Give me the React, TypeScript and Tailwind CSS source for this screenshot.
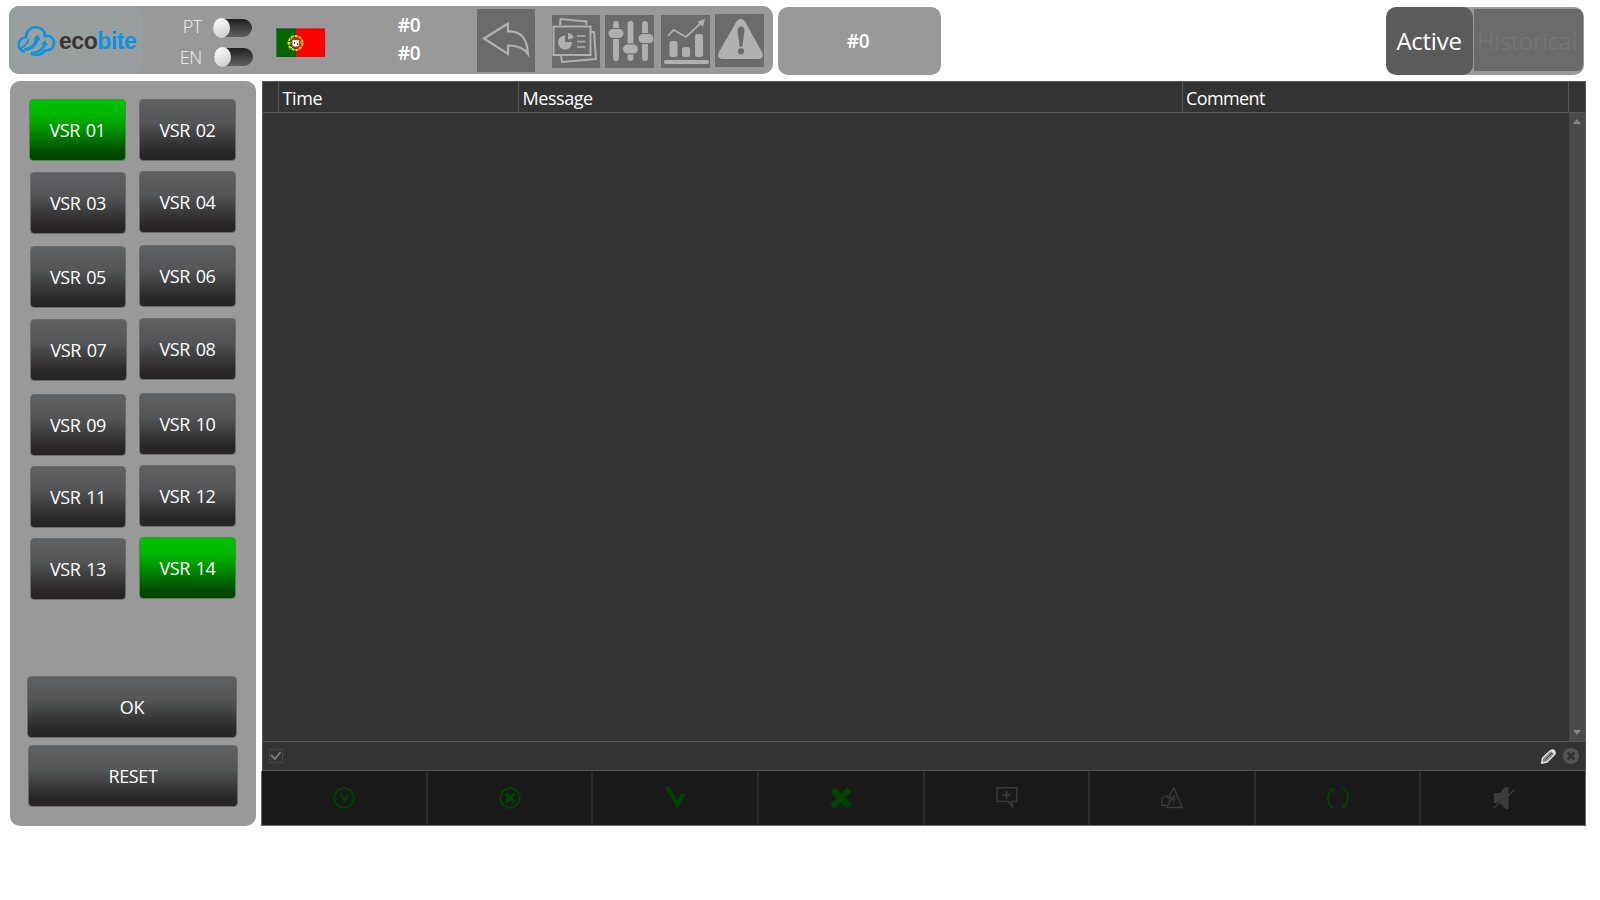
import type { ReactNode } from "react";

function GradientButton({ label, className, active = false }: { label: string; className: string; active?: boolean }) {
  const look = active
    ? "border-[#4f8a4f] bg-[linear-gradient(180deg,#00c000_0%,#00b800_22%,#00a000_42%,#004a00_88%,#004400_100%)]"
    : "border-[#6b6b6b] bg-[linear-gradient(180deg,#5f6163_0%,#535557_38%,#2a2728_86%,#252324_100%)]";
  return (
    <button
      className={`flex h-[62px] shrink-0 items-center justify-center rounded-[4px] border pb-px text-[18px] leading-none tracking-[-0.35px] text-white [word-spacing:1.2px] ${look} ${className}`}
    >
      {label}
    </button>
  );
}

function Toggle({ className }: { className: string }) {
  return (
    <div className={`flex h-[18px] w-[39px] items-center rounded-full bg-[linear-gradient(180deg,#1e1e1e,#606264)] ${className}`}>
      <div className="h-[20px] w-[17px] shrink-0 rounded-[50%] bg-[linear-gradient(160deg,#ffffff,#c9c9cb)]" />
    </div>
  );
}

function Logo() {
  return (
    <div className="flex h-[68px] w-[134px] items-center rounded-[10px] bg-[#999e9f] pl-[8px]">
      <svg width="39" height="31" viewBox="0 0 39 31" className="mt-[1px] shrink-0" fill="none" stroke="#0b93e0" strokeWidth="2.6">
        <path d="M8 27C3 26 1 22 2 18C3 14 6 12.500 9 12.500C8.500 6 14 2 18.500 2.200C24 2.300 28 5 27.800 11C34 10 37 14 37 18C37 23 33 25.500 28 25.500C25 30 18 31 14 28.500" />
        <path d="M7 23C13 23 17 19 18 14L15.500 14.500L21 9.500L24 16L21.500 15C20 22 14 26 8 26Z" fill="#0b93e0" stroke="none" />
        <path d="M14 27C21 27 25 23 26 19L23.500 19.500L28 15L31 20.500L29 20C27 26 20 30 14 28Z" fill="#0b93e0" stroke="none" />
        <path d="M3 24C8 21 11 18 12 14" strokeWidth="1.800" />
      </svg>
      <span className="mt-[2px] ml-[3px] font-['Liberation_Sans'] text-[23px] leading-none font-bold tracking-[-0.45px] text-[#3a3432]">
        eco<span className="text-[#0b93e0]">bite</span>
      </span>
    </div>
  );
}

function Flag() {
  return (
    <svg width="49" height="29" viewBox="0 0 49 29">
      <rect width="49" height="29" fill="#fe0000" />
      <rect width="20" height="29" fill="#006600" />
      <path d="M0 .5H20" stroke="#356b50" />
      <path d="M20 .5H49" stroke="#d43a3a" />
      <path d="M.5 0V29" stroke="#3d6b50" />
      <circle cx="19.500" cy="15" r="7" fill="none" stroke="#f5e800" strokeWidth="1.800" strokeDasharray="3 1" />
      <path d="M12.500 15H26.500M15 10L24 20M15 20L24 10" stroke="#f5e800" />
      <path d="M15.500 10H24V16C24 21 15.500 21 15.500 16Z" fill="#f01818" />
      <path d="M16.500 12H23V16C23 19.500 16.500 19.500 16.500 16Z" fill="#ffffff" />
      <path d="M18 14h1v2h-1zM21 15h1v2h-1z" fill="#3344aa" />
    </svg>
  );
}

function Tile({ children, className }: { children: ReactNode; className: string }) {
  return <div className={`flex shrink-0 bg-[#6b6b6b] ${className}`}>{children}</div>;
}

function BackIcon() {
  return (
    <svg width="58" height="63" viewBox="0 0 58 63" fill="none" stroke="#b0b0b0" strokeWidth="2.2">
      <path d="M7 29.500L31 14.500V22.500C42 22 50 27 51 45C47 39 41 36.500 31 36.500V45Z" />
    </svg>
  );
}

function ReportIcon() {
  return (
    <svg width="48" height="53" viewBox="0 0 48 53" fill="none" stroke="#b0b0b0" strokeWidth="2">
      <path d="M8 10L8.500 4L34.500 6.500L34 10" />
      <path d="M39 17L42 17L44 44L10 47L9 41" />
      <path d="M1.500 11.500H38.500V40H1.500Z" />
      <path d="M13 20.500V27H20A7 7 0 1 1 13 20.500Z" fill="#b0b0b0" stroke="none" />
      <path d="M16 18A6 6 0 0 1 21.500 23L16 24.500Z" fill="#b0b0b0" stroke="none" />
      <path d="M25 21H33.500M25 26.500H33.500M25 32H33.500" strokeWidth="1.600" />
    </svg>
  );
}

function SlidersIcon() {
  return (
    <svg width="49" height="53" viewBox="0 0 49 53" fill="none" strokeLinecap="round">
      <path d="M11 9V43M25.500 9V43M40 9V43" stroke="#b0b0b0" strokeWidth="5.800" />
      <g stroke="#6b6b6b" strokeWidth="11">
        <path d="M8 18.500H14M22.500 34H28.500M38 23.500H44" />
      </g>
      <path d="M8 18.500H14M22.500 34H28.500M38 23.500H44" stroke="#b0b0b0" strokeWidth="9" />
    </svg>
  );
}

function ChartIcon() {
  return (
    <svg width="49" height="53" viewBox="0 0 49 53" fill="#b0b0b0">
      <rect x="8.500" y="26" width="8" height="16" rx="2.500" />
      <rect x="21" y="32" width="8" height="10" rx="2.500" />
      <rect x="34" y="19" width="8" height="23" rx="2.500" />
      <rect x="3" y="45" width="45" height="4" rx="2" />
      <path d="M7 21L12.500 15L25 22L40.500 7.500" fill="none" stroke="#b0b0b0" strokeWidth="1.800" />
      <path d="M44 4L42 12L36.500 6.500Z" />
    </svg>
  );
}

function WarningIcon() {
  return (
    <svg width="49" height="53" viewBox="0 0 49 53">
      <path d="M21.500 7.500Q26 2 30 7.500L47 38Q50 45 43 45H8Q1 45 4 38Z" fill="#b0b0b0" />
      <path d="M26 12.500Q30 12.500 29.300 18L27.500 32Q26 34 24.500 32L22.700 18Q22 12.500 26 12.500Z" fill="#6b6b6b" />
      <circle cx="26" cy="37.300" r="3.100" fill="#6b6b6b" />
    </svg>
  );
}

const G = "#004400";
const D = "#3c3c3c";

const tools: ReactNode[] = [
  <svg key="ack" width="22" height="22" viewBox="0 0 22 22" fill="none" stroke={G} strokeWidth="1.800">
    <circle cx="11" cy="11" r="9.800" />
    <path d="M7.500 6.500L11.500 14L14.500 8.500" />
  </svg>,
  <svg key="ack-off" width="22" height="22" viewBox="0 0 22 22" fill="none" stroke={G}>
    <circle cx="11" cy="11" r="9.800" strokeWidth="1.800" />
    <path d="M6.800 6.800L15.200 15.200M15.200 6.800L6.800 15.200" strokeWidth="3.400" />
  </svg>,
  <svg key="ack-all" width="22" height="22" viewBox="0 0 22 22" fill={G}>
    <path d="M0 0H5L12 13.500L16 6.500H21L12.500 22Z" />
  </svg>,
  <svg key="clear-all" width="22" height="22" viewBox="0 0 22 22" fill="none" stroke={G} strokeWidth="6.300">
    <path d="M2.500 2.500L19.500 19.500M19.500 2.500L2.500 19.500" />
  </svg>,
  <svg key="comment" width="22" height="22" viewBox="0 0 22 22" fill="none" stroke={D} strokeWidth="1.400">
    <path d="M1 .8H20.800V14.400H15.500L16.500 19.500L12 14.400H1Z" />
    <path d="M6.500 8H14.500M10.500 4V12" strokeWidth="1.700" />
  </svg>,
  <svg key="alarm" width="22" height="22" viewBox="0 0 22 22" fill="none" stroke={D} strokeWidth="1.300">
    <path d="M7.500 10L13 1L21 20.500H5" />
    <path d="M13 8V15M13 16.500V18" strokeWidth="1.400" />
    <path d="M.8 11.500L5.500 8.500L7 10.500H11V13H8.500V16L6.500 18.500H.8Z" />
  </svg>,
  <svg key="sync" width="22" height="22" viewBox="0 0 22 22" fill="none" stroke={G} strokeWidth="1.800">
    <path d="M6.500 21C-.5 17 -.5 8 4.500 3.500M15.500 1C22.500 5 22.500 14 17.500 18.500" />
    <path d="M2 1.200H7.500V6ZM20 20.500H14.500L16 15.500Z" fill={G} stroke="none" />
  </svg>,
  <svg key="mute" width="22" height="22" viewBox="0 0 22 22" fill={D}>
    <path d="M1 6H7L12 0H15.500V22H13L7 16H1Z" />
    <path d="M.5 21L21.500 3" stroke={D} strokeWidth="1.300" />
    <path d="M.5 19.500L7.500 13.500" stroke="#1a1a1a" strokeWidth="1" />
  </svg>,
];

const leftColumn = [
  { label: "VSR 01", className: "w-[97px]", active: true },
  { label: "VSR 03", className: "mt-[11px] ml-px w-[96px]" },
  { label: "VSR 05", className: "mt-[12px] ml-px w-[96px]" },
  { label: "VSR 07", className: "mt-[11px] ml-px w-[97px]" },
  { label: "VSR 09", className: "mt-[13px] ml-px w-[96px]" },
  { label: "VSR 11", className: "mt-[10px] ml-px w-[96px]" },
  { label: "VSR 13", className: "mt-[10px] ml-px w-[96px]" },
];

const rightColumn = [
  { label: "VSR 02", className: "w-[97px]" },
  { label: "VSR 04", className: "mt-[10px] w-[97px]" },
  { label: "VSR 06", className: "mt-[12px] w-[97px]" },
  { label: "VSR 08", className: "mt-[11px] w-[97px]" },
  { label: "VSR 10", className: "mt-[13px] w-[97px]" },
  { label: "VSR 12", className: "mt-[10px] w-[97px]" },
  { label: "VSR 14", className: "mt-[10px] w-[97px]", active: true },
];

function TopBar() {
  return (
    <header className="flex h-[75px] items-start pt-[6px] pl-[9px]">
      <div className="flex h-[68px] w-[764px] shrink-0 items-start rounded-[10px] bg-[#999999]">
        <Logo />
        <div className="flex w-[59px] flex-col items-end pt-[10px] font-light text-[#f2f2f2]">
          <span className="flex h-[20px] items-center text-[18px] leading-none tracking-[-0.3px]">PT</span>
          <span className="mt-[11px] flex h-[20px] items-center text-[18px] leading-none tracking-[-0.3px]">EN</span>
        </div>
        <div className="ml-[11px] flex flex-col pt-[13px]">
          <Toggle className="" />
          <Toggle className="mt-[11px] ml-px" />
        </div>
        <div className="mt-[22px] ml-[23px]">
          <Flag />
        </div>
        <div className="ml-[72px] flex w-[24px] flex-col items-center pt-[9px] text-[19px] font-semibold tracking-[-0.4px] text-white">
          <span className="flex h-[20px] items-center leading-none">#0</span>
          <span className="mt-[8px] flex h-[20px] items-center leading-none">#0</span>
        </div>
        <Tile className="mt-[3px] ml-[56px] h-[63px] w-[58px]"><BackIcon /></Tile>
        <Tile className="mt-[9px] ml-[17px] h-[53px] w-[48px]"><ReportIcon /></Tile>
        <Tile className="mt-[9px] ml-[5px] h-[53px] w-[49px]"><SlidersIcon /></Tile>
        <Tile className="mt-[9px] ml-[7px] h-[53px] w-[49px]"><ChartIcon /></Tile>
        <Tile className="mt-[8px] ml-[5px] h-[53px] w-[49px]"><WarningIcon /></Tile>
      </div>
      <div className="mt-px ml-[5px] flex h-[68px] w-[163px] items-center justify-center rounded-[10px] bg-[#999999] pt-px pr-[3px] text-[19px] leading-none font-semibold tracking-[-0.4px] text-white">
        #0
      </div>
      <div className="mt-px ml-[445px] flex h-[68px] w-[198px] overflow-hidden rounded-[10px] bg-[#999999] text-[24px] leading-none tracking-[-0.25px]">
        <div className="flex w-[87px] items-center justify-center rounded-[10px] bg-[#5b5b5b] pr-px text-white">Active</div>
        <div className="mt-[2px] ml-px flex h-[62px] w-[109px] items-center justify-center rounded-r-[6px] bg-[#6b6b6b] pt-[2px] pr-[3px] tracking-[-0.5px] text-[#757575]">
          Historical
        </div>
      </div>
    </header>
  );
}

function Sidebar() {
  return (
    <aside className="flex h-[745px] w-[246px] shrink-0 flex-col rounded-[10px] bg-[#999999] pt-[18px]">
      <div className="flex pl-[19px]">
        <div className="flex w-[110px] flex-col">
          {leftColumn.map((b) => (
            <GradientButton key={b.label} {...b} />
          ))}
        </div>
        <div className="flex flex-col">
          {rightColumn.map((b) => (
            <GradientButton key={b.label} {...b} />
          ))}
        </div>
      </div>
      <GradientButton label="OK" className="mt-[76px] ml-[17px] w-[210px]" />
      <GradientButton label="RESET" className="mt-[7px] ml-[18px] w-[210px]" />
    </aside>
  );
}

function AlarmTable() {
  return (
    <main className="ml-[5px] flex h-[745px] w-[1325px] shrink-0 flex-col">
      <div className="ml-px flex h-[690px] flex-col border border-[#555555] bg-[#333333]">
        <div className="flex h-[31px] border-b border-[#555555] text-[18px] leading-[33px] tracking-[-0.45px] text-white">
          <div className="w-[16px] border-r border-[#555555]" />
          <div className="w-[240px] border-r border-[#555555] pl-[3.5px] tracking-[-0.4px]">Time</div>
          <div className="w-[664px] border-r border-[#555555] pl-[3.5px]">Message</div>
          <div className="w-[386px] border-r border-[#555555] pl-[3px] tracking-[-0.6px]">Comment</div>
        </div>
        <div className="flex flex-1 justify-end">
          <div className="flex w-[16px] flex-col items-center justify-between bg-[#4a4a4a] pt-[6px] pb-[6px]">
            <svg width="8" height="5" viewBox="0 0 8 5"><path d="M0 5L4 0L8 5Z" fill="#868686" /></svg>
            <svg width="8" height="5" viewBox="0 0 8 5"><path d="M0 0L4 5L8 0Z" fill="#868686" /></svg>
          </div>
        </div>
        <div className="flex h-[29px] items-center border-t border-[#555555] pr-[6px] pl-[6px]">
          <div className="flex h-[14px] w-[14px] items-center justify-center border border-[#444444]">
            <svg width="12" height="12" viewBox="0 0 12 12" fill="none" stroke="#777777" strokeWidth="2">
              <path d="M1 5L5 9L10.500 2" />
            </svg>
          </div>
          <svg className="ml-auto" width="15" height="15" viewBox="0 0 15 15">
            <path d="M.8 14.200L1.500 9L9.500 1.500Q12 .2 13.500 2Q14.800 4 13.500 5.500L6 13Z" fill="#8a8a8a" stroke="#e4e4e4" strokeWidth="1.400" />
            <path d="M4.500 10.500L11 4" stroke="#444444" strokeWidth="1" />
            <path d="M9.500 1.500Q12 .2 13.500 2Q14.800 4 13.500 5.500Z" fill="#e4e4e4" />
          </svg>
          <svg className="ml-[7px]" width="16" height="16" viewBox="0 0 16 16">
            <circle cx="8" cy="8" r="8" fill="#555555" />
            <path d="M4.500 4.500L11.500 11.500M11.500 4.500L4.500 11.500" stroke="#333333" strokeWidth="2.600" />
          </svg>
        </div>
      </div>
      <div className="flex h-[55px] border-x border-b border-[#666666] bg-[#1a1a1a]">
        {tools.map((icon, i) => (
          <button key={i} className="flex flex-1 items-center justify-center border-r-2 border-[#2b2b2b] pl-px last:border-r-0">
            {icon}
          </button>
        ))}
      </div>
    </main>
  );
}

export default function App() {
  return (
    <div className="h-[900px] w-[1600px] overflow-hidden bg-white font-['Open_Sans','Noto_Sans',sans-serif]">
      <TopBar />
      <div className="flex pt-[6px] pl-[10px]">
        <Sidebar />
        <AlarmTable />
      </div>
    </div>
  );
}
